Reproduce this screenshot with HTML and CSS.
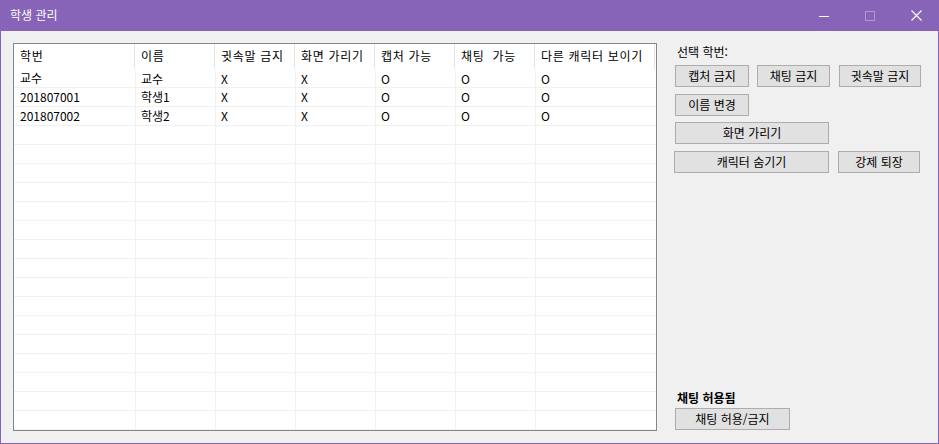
FILE: index.html
```html
<!DOCTYPE html>
<html lang="ko">
<head>
<meta charset="utf-8">
<title>학생 관리</title>
<link rel="stylesheet" href="styles.css">
</head>
<body>
<div class="window">
  <div class="titlebar">
    <span class="title">학생 관리</span>
    <div class="caption">
      <span class="cap-btn"><svg width="10" height="10" viewBox="0 0 10 10"><line x1="0" y1="5.5" x2="10" y2="5.5" stroke="#fff" stroke-width="1"/></svg></span>
      <span class="cap-btn"><svg width="10" height="10" viewBox="0 0 10 10"><rect x="0.5" y="0.5" width="9" height="9" fill="none" stroke="rgba(255,255,255,0.35)" stroke-width="1"/></svg></span>
      <span class="cap-btn"><svg width="11" height="11" viewBox="0 0 11 11"><path d="M0.5 0.5 L10.5 10.5 M10.5 0.5 L0.5 10.5" stroke="#fff" stroke-width="1.1"/></svg></span>
    </div>
  </div>
  <div class="client">
    <div class="grid">
      <div class="hrow">
        <div class="hc">학번</div><div class="hc">이름</div><div class="hc">귓속말 금지</div><div class="hc">화면 가리기</div><div class="hc">캡처 가능</div><div class="hc">채팅&nbsp; 가능</div><div class="hc">다른 캐릭터 보이기</div>
      </div>
      <div class="row"><div class="c">교수</div><div class="c">교수</div><div class="c">X</div><div class="c">X</div><div class="c">O</div><div class="c">O</div><div class="c">O</div></div>
      <div class="row"><div class="c">201807001</div><div class="c">학생1</div><div class="c">X</div><div class="c">X</div><div class="c">O</div><div class="c">O</div><div class="c">O</div></div>
      <div class="row"><div class="c">201807002</div><div class="c">학생2</div><div class="c">X</div><div class="c">X</div><div class="c">O</div><div class="c">O</div><div class="c">O</div></div>
      <div class="row"><div class="c"></div><div class="c"></div><div class="c"></div><div class="c"></div><div class="c"></div><div class="c"></div><div class="c"></div></div>
      <div class="row"><div class="c"></div><div class="c"></div><div class="c"></div><div class="c"></div><div class="c"></div><div class="c"></div><div class="c"></div></div>
      <div class="row"><div class="c"></div><div class="c"></div><div class="c"></div><div class="c"></div><div class="c"></div><div class="c"></div><div class="c"></div></div>
      <div class="row"><div class="c"></div><div class="c"></div><div class="c"></div><div class="c"></div><div class="c"></div><div class="c"></div><div class="c"></div></div>
      <div class="row"><div class="c"></div><div class="c"></div><div class="c"></div><div class="c"></div><div class="c"></div><div class="c"></div><div class="c"></div></div>
      <div class="row"><div class="c"></div><div class="c"></div><div class="c"></div><div class="c"></div><div class="c"></div><div class="c"></div><div class="c"></div></div>
      <div class="row"><div class="c"></div><div class="c"></div><div class="c"></div><div class="c"></div><div class="c"></div><div class="c"></div><div class="c"></div></div>
      <div class="row"><div class="c"></div><div class="c"></div><div class="c"></div><div class="c"></div><div class="c"></div><div class="c"></div><div class="c"></div></div>
      <div class="row"><div class="c"></div><div class="c"></div><div class="c"></div><div class="c"></div><div class="c"></div><div class="c"></div><div class="c"></div></div>
      <div class="row"><div class="c"></div><div class="c"></div><div class="c"></div><div class="c"></div><div class="c"></div><div class="c"></div><div class="c"></div></div>
      <div class="row"><div class="c"></div><div class="c"></div><div class="c"></div><div class="c"></div><div class="c"></div><div class="c"></div><div class="c"></div></div>
      <div class="row"><div class="c"></div><div class="c"></div><div class="c"></div><div class="c"></div><div class="c"></div><div class="c"></div><div class="c"></div></div>
      <div class="row"><div class="c"></div><div class="c"></div><div class="c"></div><div class="c"></div><div class="c"></div><div class="c"></div><div class="c"></div></div>
      <div class="row"><div class="c"></div><div class="c"></div><div class="c"></div><div class="c"></div><div class="c"></div><div class="c"></div><div class="c"></div></div>
      <div class="row"><div class="c"></div><div class="c"></div><div class="c"></div><div class="c"></div><div class="c"></div><div class="c"></div><div class="c"></div></div>
      <div class="row"><div class="c"></div><div class="c"></div><div class="c"></div><div class="c"></div><div class="c"></div><div class="c"></div><div class="c"></div></div>
    </div>
    <div class="panel">
      <div class="top">
        <div class="label">선택 학번:</div>
        <div class="brow r1">
          <button class="btn w74">캡처 금지</button>
          <button class="btn w73 gap8">채팅 금지</button>
          <button class="btn w82 gap9">귓속말 금지</button>
        </div>
        <div class="brow r2">
          <button class="btn w74">이름 변경</button>
        </div>
        <div class="brow r3">
          <button class="btn w154">화면 가리기</button>
        </div>
        <div class="brow r4">
          <button class="btn w155 shift">캐릭터 숨기기</button>
          <button class="btn w82 gap9">강제 퇴장</button>
        </div>
      </div>
      <div class="bottom">
        <div class="label bold">채팅 허용됨</div>
        <button class="btn w115">채팅 허용/금지</button>
      </div>
    </div>
  </div>
</div>
</body>
</html>
```

FILE: styles.css
```css
* { box-sizing: border-box; }
html, body { margin: 0; padding: 0; }
body {
  width: 939px;
  height: 444px;
  overflow: hidden;
  font-family: "Noto Sans CJK KR", "Noto Sans", sans-serif;
  font-size: 12px;
  color: #000;
  background: #f0f0f0;
}
.window {
  width: 939px;
  height: 444px;
  border: 1px solid #8764b8;
  border-top: 0;
  background: #f0f0f0;
  display: flex;
  flex-direction: column;
}
.titlebar {
  height: 31px;
  flex: none;
  background: #8764b8;
  margin: 0 -1px;
  display: flex;
  align-items: center;
  justify-content: space-between;
}
.title {
  color: #fff;
  padding-left: 10px;
  font-size: 12px;
  line-height: 16px;
  margin-top: -1px;
}
.caption { display: flex; height: 31px; }
.cap-btn {
  width: 46px;
  height: 31px;
  display: flex;
  align-items: center;
  justify-content: center;
}
.cap-btn svg { display: block; }
.client {
  flex: 1;
  display: flex;
  padding: 12px 0 0 12px;
}
.grid {
  width: 644px;
  height: 388px;
  border: 1px solid #828790;
  background: #fff;
  overflow: hidden;
  flex: none;
}
.hrow, .row {
  display: grid;
  grid-template-columns: 121px 80px 80px 80px 80px 80px 120px;
}
.hrow { height: 25px; }
.hc {
  border-right: 1px solid #e5e5e5;
  padding-left: 6px;
  line-height: 24px;
  letter-spacing: 0.7px;
  white-space: nowrap;
  overflow: hidden;
}
.row {
  height: 19px;
  border-bottom: 1px solid #f0f0f0;
}
.c {
  padding-left: 6px;
  line-height: 18px;
  white-space: nowrap;
}
.c + .c {
  border-left: 1px solid #f0f0f0;
  padding-left: 5px;
}
.hrow + .row .c + .c { margin-top: 1px; }
.panel {
  margin-left: 18px;
  height: 388px;
  display: flex;
  flex-direction: column;
  justify-content: space-between;
  width: 250px;
}
.label {
  padding-left: 2px;
  line-height: 16px;
}
.bold { font-weight: bold; margin-bottom: 2px; }
.top .label { margin-top: 1px; }
.brow { display: flex; }
.r1 { margin-top: 5px; }
.r2 { margin-top: 7px; }
.r3 { margin-top: 6px; }
.r4 { margin-top: 7px; }
.btn {
  height: 22px;
  padding: 0;
  background: #e1e1e1;
  border: 1px solid #adadad;
  font-family: inherit;
  font-size: 12px;
  color: #000;
  line-height: 18px;
  text-align: center;
}
.w74 { width: 74px; }
.w73 { width: 73px; }
.w82 { width: 82px; }
.w154 { width: 154px; }
.w155 { width: 155px; }
.w115 { width: 115px; }
.gap8 { margin-left: 8px; }
.gap9 { margin-left: 9px; }
.shift { margin-left: -1px; }
.bottom { display: flex; flex-direction: column; padding-bottom: 1px; }
```
